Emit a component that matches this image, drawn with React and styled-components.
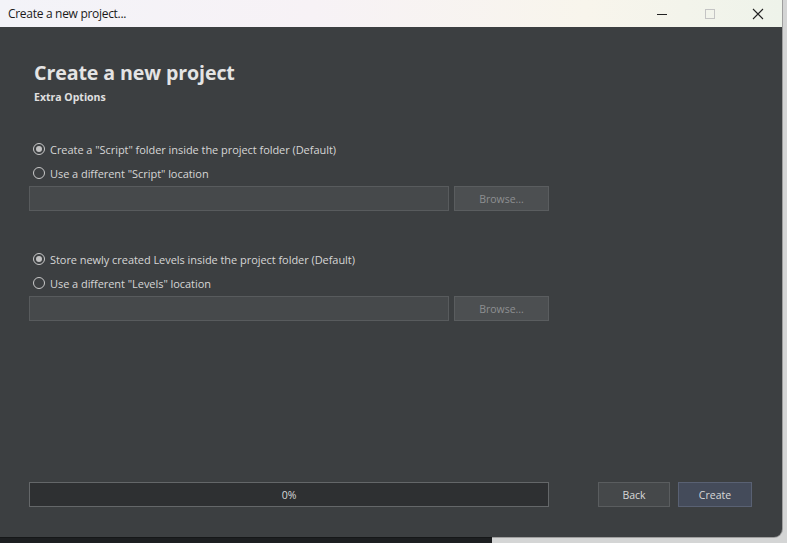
import React from 'react'
import styled, { createGlobalStyle } from 'styled-components'

const GlobalStyle = createGlobalStyle`
  html, body {
    margin: 0;
    padding: 0;
  }
  body {
    width: 787px;
    height: 543px;
    overflow: hidden;
    font-family: "Open Sans", "Noto Sans", sans-serif;
  }
`

const options = [
  {
    key: 'script',
    defaultLabel: 'Create a "Script" folder inside the project folder (Default)',
    customLabel: 'Use a different "Script" location',
  },
  {
    key: 'levels',
    defaultLabel: 'Store newly created Levels inside the project folder (Default)',
    customLabel: 'Use a different "Levels" location',
  },
]

const MinimizeIcon = () => (
  <svg width="12" height="12" viewBox="0 0 12 12">
    <path d="M1 6.5h10" stroke="#222" strokeWidth="1" />
  </svg>
)

const MaximizeIcon = () => (
  <svg width="12" height="12" viewBox="0 0 12 12">
    <rect x="1.5" y="1.5" width="9" height="9" fill="none" stroke="#c4c4c4" strokeWidth="1" />
  </svg>
)

const CloseIcon = () => (
  <svg width="12" height="12" viewBox="0 0 12 12">
    <path d="M1 1l10 10M11 1L1 11" stroke="#222" strokeWidth="1.1" />
  </svg>
)

const App = () => {
  return (
    <Desktop>
      <GlobalStyle />
      <Window>
        <TitleBar>
          <TitleText>Create a new project...</TitleText>
          <Controls>
            <ControlButton><MinimizeIcon /></ControlButton>
            <ControlButton><MaximizeIcon /></ControlButton>
            <ControlButton><CloseIcon /></ControlButton>
          </Controls>
        </TitleBar>
        <Body>
          <Header>
            <Heading>Create a new project</Heading>
            <SubHeading>Extra Options</SubHeading>
          </Header>
          {options.map((opt) => (
            <OptionGroup key={opt.key}>
              <RadioRow>
                <Radio checked />
                <RadioLabel>{opt.defaultLabel}</RadioLabel>
              </RadioRow>
              <RadioRow>
                <Radio />
                <RadioLabel>{opt.customLabel}</RadioLabel>
              </RadioRow>
              <PathRow>
                <PathInput />
                <BrowseButton>Browse...</BrowseButton>
              </PathRow>
            </OptionGroup>
          ))}
          <Footer>
            <Progress>0%</Progress>
            <FooterButtons>
              <Button>Back</Button>
              <Button primary>Create</Button>
            </FooterButtons>
          </Footer>
        </Body>
      </Window>
    </Desktop>
  )
}

export default App

const Desktop = styled.div`
  width: 787px;
  height: 543px;
  background: linear-gradient(to right, #1d1f21 492px, #d4d5d5 492px);
  overflow: hidden;
`

const Window = styled.div`
  width: 782px;
  height: 537px;
  display: flex;
  flex-direction: column;
  border-bottom-right-radius: 8px;
  overflow: hidden;
  background: #3c3f41;
  box-shadow: 0 0 0 1px rgba(0, 0, 0, 0.25);
`

const TitleBar = styled.div`
  height: 27px;
  flex: none;
  display: flex;
  align-items: center;
  justify-content: space-between;
  padding-left: 8px;
  background: linear-gradient(to right, #f3f3f8 0%, #f7f2f6 40%, #f8f5ec 75%, #eef3ea 100%);
`

const TitleText = styled.span`
  font-family: "Open Sans", "Noto Sans", sans-serif;
  font-size: 12px;
  color: #1a1a1a;
  letter-spacing: -0.3px;
`

const Controls = styled.div`
  display: flex;
  align-items: center;
  height: 100%;
`

const ControlButton = styled.div`
  width: 48px;
  height: 100%;
  display: flex;
  align-items: center;
  justify-content: center;
`

const Body = styled.div`
  flex: 1;
  display: flex;
  flex-direction: column;
  padding: 0 30px 30px 29px;
  color: #d4d4d4;
`

const Header = styled.div`
  padding: 33px 0 0 5px;
  margin-bottom: 32px;
`

const Heading = styled.h1`
  margin: 0;
  font-size: 19.6px;
  line-height: 26px;
  font-weight: 700;
  color: #e4e4e4;
  letter-spacing: -0.1px;
`

const SubHeading = styled.div`
  margin-top: 4px;
  font-size: 10.5px;
  line-height: 15px;
  font-weight: 700;
  color: #e0e0e0;
`

const OptionGroup = styled.div`
  display: flex;
  flex-direction: column;
  margin-bottom: 36px;
`

const RadioRow = styled.div`
  display: flex;
  align-items: center;
  height: 24px;
  padding-left: 4px;
  gap: 5px;
`

const Radio = styled.span`
  width: 10px;
  height: 10px;
  border-radius: 50%;
  border: 1px solid #c9c9c9;
  display: flex;
  align-items: center;
  justify-content: center;
  flex: none;

  &::after {
    content: '';
    width: 6px;
    height: 6px;
    border-radius: 50%;
    background: ${(props) => (props.checked ? '#c2c2c2' : 'transparent')};
  }
`

const RadioLabel = styled.span`
  font-size: 11px;
  color: #d6d6d6;
  letter-spacing: -0.05px;
`

const PathRow = styled.div`
  display: flex;
  gap: 5px;
  margin-top: 1px;
`

const PathInput = styled.div`
  width: 418px;
  height: 23px;
  background: #46494b;
  border: 1px solid #585b5d;
`

const BrowseButton = styled.div`
  width: 93px;
  height: 23px;
  display: flex;
  align-items: center;
  justify-content: center;
  background: #4c4f51;
  border: 1px solid #5a5d5f;
  font-size: 10.5px;
  color: #8e9092;
`

const Footer = styled.div`
  margin-top: auto;
  display: flex;
  align-items: center;
  justify-content: space-between;
`

const Progress = styled.div`
  width: 518px;
  height: 23px;
  display: flex;
  align-items: center;
  justify-content: center;
  background: #2e3032;
  border: 1px solid #646769;
  font-size: 10.5px;
  color: #d8d8d8;
`

const FooterButtons = styled.div`
  display: flex;
  gap: 8px;
`

const Button = styled.div`
  width: ${(props) => (props.primary ? '72px' : '70px')};
  height: 23px;
  display: flex;
  align-items: center;
  justify-content: center;
  background: ${(props) => (props.primary ? '#444b5a' : '#45484a')};
  border: 1px solid ${(props) => (props.primary ? '#596173' : '#5a5d5f')};
  font-size: 10.5px;
  color: #d8d8d8;
`
